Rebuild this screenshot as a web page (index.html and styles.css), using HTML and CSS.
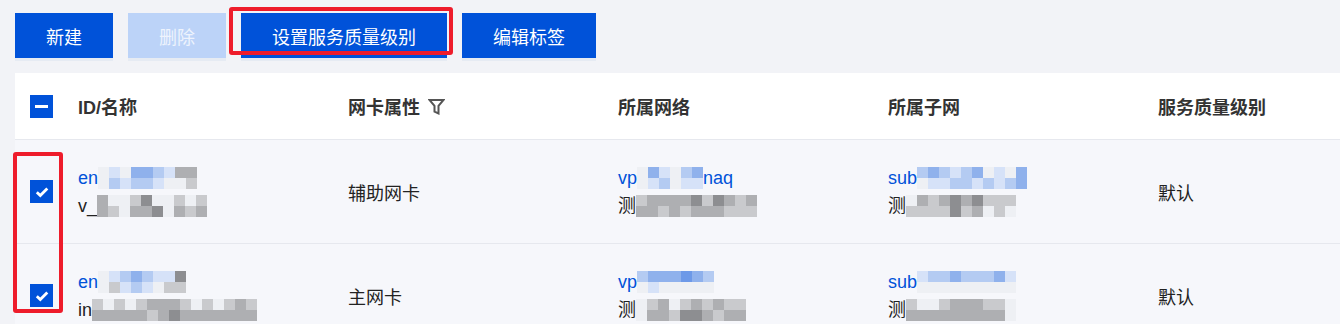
FILE: index.html
```html
<!DOCTYPE html>
<html lang="zh-CN">
<head>
<meta charset="utf-8">
<title>弹性网卡</title>
<link rel="stylesheet" href="styles.css">
</head>
<body>
<div class="toolbar">
  <button class="btn">新建</button>
  <button class="btn disabled">删除</button>
  <button class="btn">设置服务质量级别</button>
  <button class="btn">编辑标签</button>
</div>

<div class="table">
  <div class="row head">
    <div class="cell chk"><span class="checkbox"><span class="minus"></span></span></div>
    <div class="cell">ID/名称</div>
    <div class="cell">网卡属性
      <svg class="filter" width="17" height="17" viewBox="0 0 17 17"><path d="M1.5 2h14l-5 5.8v7.7l-4 -1.8v-5.9z" fill="none" stroke="#555" stroke-width="2" stroke-linejoin="miter"/></svg>
    </div>
    <div class="cell">所属网络</div>
    <div class="cell">所属子网</div>
    <div class="cell">服务质量级别</div>
  </div>

  <div class="row body">
    <div class="cell chk"><span class="checkbox"><svg width="14" height="12" viewBox="0 0 14 12"><path d="M1.8 6.2l3.5 3.4 7-7.2" fill="none" stroke="#fff" stroke-width="2.8"/></svg></span></div>
    <div class="cell">
      <div class="line link">en<span class="mz"><i class="a"></i><i class="a"></i><i class="p"></i><i class="q"></i><i class="a"></i><i class="p"></i><i class="r"></i><i class="q"></i><i class="r"></i><i class="q"></i><i class="q"></i><i class="p"></i><i class="p"></i><i class="a"></i><i class="c"></i><i class="a"></i><i class="c"></i><i class="b"></i></span></div>
      <div class="line">v_<span class="mz"><i class="c"></i><i class="c"></i><i class="a"></i><i class="b"></i><i class="a"></i><i class="a"></i><i class="b"></i><i class="c"></i><i class="d"></i><i class="c"></i><i class="a"></i><i class="d"></i><i class="a"></i><i class="a"></i><i class="b"></i><i class="c"></i><i class="a"></i><i class="b"></i><i class="b"></i><i class="c"></i></span></div>
    </div>
    <div class="cell">辅助网卡</div>
    <div class="cell">
      <div class="line link">vp<span class="mz"><i class="a"></i><i class="a"></i><i class="r"></i><i class="p"></i><i class="p"></i><i class="q"></i><i class="a"></i><i class="a"></i><i class="q"></i><i class="p"></i><i class="r"></i><i class="p"></i></span>naq</div>
      <div class="line">测<span class="mz"><i class="b"></i><i class="c"></i><i class="c"></i><i class="c"></i><i class="c"></i><i class="b"></i><i class="c"></i><i class="c"></i><i class="c"></i><i class="b"></i><i class="d"></i><i class="c"></i><i class="b"></i><i class="c"></i><i class="d"></i><i class="c"></i><i class="c"></i><i class="b"></i><i class="b"></i><i class="b"></i><i class="c"></i><i class="b"></i></span></div>
    </div>
    <div class="cell">
      <div class="line link">sub<span class="mz"><i class="q"></i><i class="a"></i><i class="r"></i><i class="p"></i><i class="q"></i><i class="p"></i><i class="p"></i><i class="q"></i><i class="q"></i><i class="q"></i><i class="r"></i><i class="p"></i><i class="a"></i><i class="q"></i><i class="p"></i><i class="p"></i><i class="a"></i><i class="q"></i><i class="r"></i><i class="r"></i></span></div>
      <div class="line">测<span class="mz"><i class="a"></i><i class="b"></i><i class="c"></i><i class="b"></i><i class="b"></i><i class="b"></i><i class="c"></i><i class="b"></i><i class="d"></i><i class="d"></i><i class="c"></i><i class="b"></i><i class="d"></i><i class="c"></i><i class="b"></i><i class="a"></i><i class="b"></i><i class="b"></i><i class="b"></i><i class="a"></i></span></div>
    </div>
    <div class="cell">默认</div>
  </div>

  <div class="row body">
    <div class="cell chk"><span class="checkbox"><svg width="14" height="12" viewBox="0 0 14 12"><path d="M1.8 6.2l3.5 3.4 7-7.2" fill="none" stroke="#fff" stroke-width="2.8"/></svg></span></div>
    <div class="cell">
      <div class="line link">en<span class="mz"><i class="a"></i><i class="a"></i><i class="p"></i><i class="b"></i><i class="q"></i><i class="p"></i><i class="r"></i><i class="q"></i><i class="q"></i><i class="p"></i><i class="p"></i><i class="a"></i><i class="p"></i><i class="b"></i><i class="d"></i><i class="b"></i></span></div>
      <div class="line">in<span class="mz"><i class="b"></i><i class="c"></i><i class="a"></i><i class="c"></i><i class="b"></i><i class="c"></i><i class="a"></i><i class="c"></i><i class="b"></i><i class="c"></i><i class="c"></i><i class="b"></i><i class="c"></i><i class="c"></i><i class="c"></i><i class="d"></i><i class="b"></i><i class="c"></i><i class="a"></i><i class="c"></i><i class="b"></i><i class="c"></i><i class="a"></i><i class="c"></i><i class="b"></i><i class="c"></i><i class="c"></i><i class="c"></i><i class="b"></i><i class="c"></i></span></div>
    </div>
    <div class="cell">主网卡</div>
    <div class="cell">
      <div class="line link">vp<span class="mz"><i class="q"></i><i class="a"></i><i class="r"></i><i class="p"></i><i class="r"></i><i class="a"></i><i class="r"></i><i class="a"></i><i class="s"></i><i class="a"></i><i class="r"></i><i class="a"></i><i class="q"></i><i class="a"></i></span></div>
      <div class="line">测<span class="mz"><i class="a"></i><i class="a"></i><i class="b"></i><i class="c"></i><i class="c"></i><i class="c"></i><i class="a"></i><i class="b"></i><i class="b"></i><i class="d"></i><i class="c"></i><i class="d"></i><i class="b"></i><i class="c"></i><i class="c"></i><i class="b"></i><i class="b"></i><i class="c"></i><i class="b"></i><i class="c"></i></span></div>
    </div>
    <div class="cell">
      <div class="line link">sub<span class="mz"><i class="p"></i><i class="a"></i><i class="q"></i><i class="a"></i><i class="q"></i><i class="a"></i><i class="r"></i><i class="a"></i><i class="q"></i><i class="a"></i><i class="q"></i><i class="a"></i><i class="q"></i><i class="a"></i><i class="r"></i><i class="a"></i><i class="p"></i><i class="a"></i></span></div>
      <div class="line">测<span class="mz"><i class="b"></i><i class="c"></i><i class="a"></i><i class="c"></i><i class="a"></i><i class="c"></i><i class="b"></i><i class="c"></i><i class="c"></i><i class="c"></i><i class="c"></i><i class="c"></i><i class="c"></i><i class="c"></i><i class="b"></i><i class="c"></i><i class="b"></i><i class="c"></i><i class="a"></i><i class="a"></i></span></div>
    </div>
    <div class="cell">默认</div>
  </div>
</div>

<div class="mark mark-btn"></div>
<div class="mark mark-chk"></div>
</body>
</html>
```

FILE: styles.css
```css
html, body {
  margin: 0;
  padding: 0;
}
body {
  background: #f2f3f7;
  font-family: "Liberation Sans", "Noto Sans CJK SC", sans-serif;
  font-size: 18px;
  color: #222;
  width: 1340px;
  height: 324px;
  overflow: hidden;
  position: relative;
}
.toolbar {
  display: flex;
  gap: 15px;
  padding: 13px 0 0 15px;
  height: 45px;
  margin-bottom: 15px;
}
.btn {
  height: 45px;
  padding: 0 31px;
  border: 0;
  background: #0052d9;
  color: #fff;
  font-family: inherit;
  font-size: 18px;
  box-shadow: 0 3px 0 #e6ebf3;
  cursor: pointer;
}
.btn.disabled {
  background: #bcd3f8;
  color: #eef3fd;
}
.table {
  margin-left: 15px;
  background: #f6f7fb;
}
.row {
  display: grid;
  grid-template-columns: 49px 270px 270px 270px 270px 1fr;
  align-items: center;
  border-bottom: 1px solid #e6e8ee;
}
.row.head {
  height: 66px;
  background: #fff;
  font-weight: bold;
  color: #333;
}
.row.body {
  height: 103px;
}
.cell {
  padding-left: 14px;
  display: flex;
  flex-direction: column;
  justify-content: center;
}
.row.head .cell {
  flex-direction: row;
  align-items: center;
  justify-content: flex-start;
}
.cell.chk {
  padding-left: 15px;
}
.checkbox {
  width: 23px;
  height: 23px;
  background: #0052d9;
  display: flex;
  align-items: center;
  justify-content: center;
}
.minus {
  width: 13px;
  height: 3px;
  background: #fff;
}
.filter {
  margin-left: 8px;
}
.line {
  line-height: 28px;
  height: 28px;
  white-space: nowrap;
  display: flex;
  align-items: center;
}
.link {
  color: #0052d9;
}
.mz {
  display: inline-grid;
  grid-template-rows: repeat(2, 11px);
  grid-auto-flow: column;
  grid-auto-columns: 11px;
}
.mz i { display: block; }
.mz .a { background: #eef0f4; }
.mz .b { background: #c9cacd; }
.mz .c { background: #aeafb2; }
.mz .d { background: #8d8e91; }
.mz .p { background: #d6e2f8; }
.mz .q { background: #b4cbf2; }
.mz .r { background: #8fb1ec; }
.mz .s { background: #6d99e8; }
.mark {
  position: absolute;
  border: 4px solid #ee1c2b;
  border-radius: 3px;
  box-sizing: border-box;
}
.mark-btn {
  left: 229px;
  top: 7px;
  width: 224px;
  height: 48px;
}
.mark-chk {
  left: 13px;
  top: 152px;
  width: 50px;
  height: 161px;
}
```
